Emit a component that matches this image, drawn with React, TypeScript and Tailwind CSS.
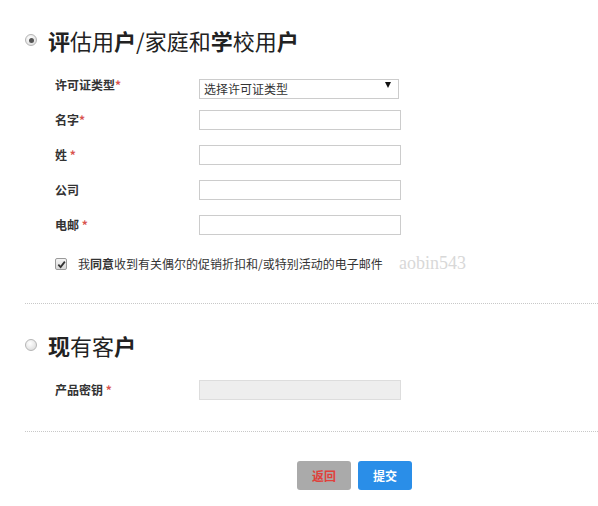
import { useState } from "react";

// Campo de formulário com rótulo à esquerda
function Field({
  label,
  star,
  children,
}: {
  label: string;
  star?: string;
  children: React.ReactNode;
}) {
  return (
    <div className="flex items-center h-[20px]">
      <div className="w-[144px] text-[12px] font-bold text-[#333] leading-[20px]">
        {label}
        {star && <span className="text-[#d9534f]">{star}</span>}
      </div>
      {children}
    </div>
  );
}

function Radio({ checked }: { checked?: boolean }) {
  return (
    <div className="w-[12px] h-[12px] rounded-full border border-[#b5b5b5] bg-[radial-gradient(circle_at_40%_35%,#ffffff,#d6d6d6)] flex items-center justify-center">
      {checked && <div className="w-[5px] h-[5px] rounded-full bg-[#555]" />}
    </div>
  );
}

export default function App() {
  const [agree, setAgree] = useState(true);

  return (
    <div className="w-[598px] h-[506px] bg-white pl-[25px] pt-[29px] font-['Noto_Sans_CJK_SC',sans-serif] text-[#333] overflow-hidden">
      {/* Primeira seção: usuário de avaliação */}
      <div className="flex items-center h-[22px] gap-[11px]">
        <Radio checked />
        <h1 className="text-[22px] leading-[22px] text-[#222] whitespace-nowrap">
          <b>评</b>估用<b>户</b>/家庭和<b>学</b>校用<b>户</b>
        </h1>
      </div>

      <div className="pl-[30px] mt-[24px] flex flex-col gap-[15px]">
        <Field label="许可证类型" star="*">
          <div className="relative w-[200px] h-[20px]">
            <select className="appearance-none w-full h-full border border-[#ccc] bg-white text-[12px] leading-[18px] pl-[4px] text-[#333] outline-none">
              <option>选择许可证类型</option>
            </select>
            <svg
              className="absolute right-[8px] top-[7px] pointer-events-none"
              width="6"
              height="6"
              viewBox="0 0 6 6"
            >
              <path d="M0 0 H6 L3 6 Z" fill="#111" />
            </svg>
          </div>
        </Field>
        <Field label="名字" star="*">
          <input className="w-[202px] h-[20px] border border-[#ccc] outline-none" />
        </Field>
        <Field label="姓" star=" *">
          <input className="w-[202px] h-[20px] border border-[#ccc] outline-none" />
        </Field>
        <Field label="公司">
          <input className="w-[202px] h-[20px] border border-[#ccc] outline-none" />
        </Field>
        <Field label="电邮" star=" *">
          <input className="w-[202px] h-[20px] border border-[#ccc] outline-none" />
        </Field>
      </div>

      <div className="relative pl-[30px] mt-[23px] flex items-center h-[12px] gap-[11px]">
        <button
          className="w-[12px] h-[12px] border border-[#9a9a9a] rounded-[2px] bg-[linear-gradient(#f4f4f4,#d8d8d8)] flex items-center justify-center"
          onClick={() => setAgree(!agree)}
        >
          {agree && (
            <svg width="9" height="9" viewBox="0 0 10 10">
              <path d="M1.5 5.2 L4 7.8 L8.7 1.8" fill="none" stroke="#333" strokeWidth="2" />
            </svg>
          )}
        </button>
        <span className="text-[12px] leading-[12px] text-[#333] whitespace-nowrap">
          我<b>同意</b>收到有关偶尔的促销折扣和/或特别活动的电子邮件
        </span>
        {/* marca d'água */}
        <span className="absolute left-[374px] top-[-5px] text-[18px] leading-[20px] font-['Liberation_Serif',serif] text-[#d8d8d8] whitespace-nowrap pointer-events-none">
          aobin543
        </span>
      </div>

      <div className="mt-[33px] border-t border-dotted border-[#c8c8c8]" />

      {/* Segunda seção: cliente existente */}
      <div className="flex items-center h-[22px] gap-[11px] mt-[30px]">
        <Radio />
        <h1 className="text-[22px] leading-[22px] text-[#222] whitespace-nowrap">
          <b>现</b>有客<b>户</b>
        </h1>
      </div>

      <div className="pl-[30px] mt-[24px]">
        <Field label="产品密钥" star=" *">
          <input disabled className="w-[202px] h-[20px] border border-[#ddd] bg-[#eeeeee]" />
        </Field>
      </div>

      <div className="mt-[31px] border-t border-dotted border-[#c8c8c8]" />

      <div className="mt-[29px] pl-[272px] flex gap-[7px]">
        <button className="w-[54px] h-[29px] rounded-[3px] bg-[#aaaaaa] text-[#e0403a] text-[12px] font-bold">
          返回
        </button>
        <button className="w-[54px] h-[29px] rounded-[3px] bg-[#2a8ee8] text-white text-[12px] font-bold">
          提交
        </button>
      </div>
    </div>
  );
}
